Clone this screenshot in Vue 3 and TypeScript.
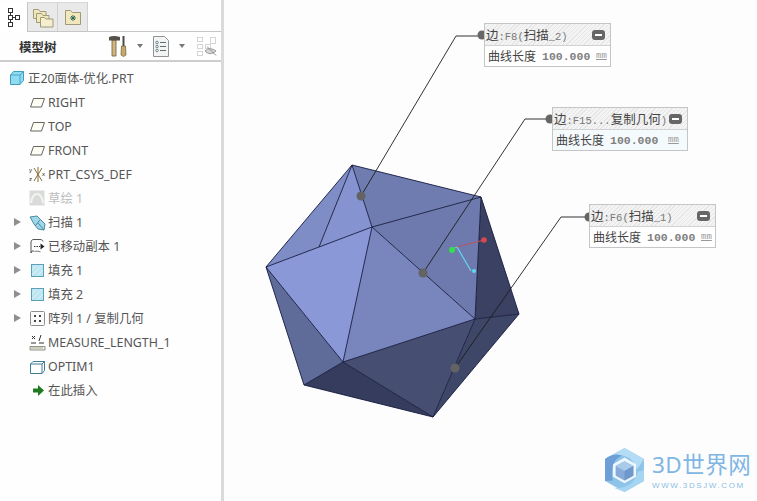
<script setup lang="ts">
interface TreeRow {
  label: string;
  icon: string;
  arrow?: boolean;
  muted?: boolean;
}

interface Callout {
  title: string;
  left: number;
  top: number;
  tint?: boolean;
}

const rows: TreeRow[] = [
  { label: "RIGHT", icon: "plane" },
  { label: "TOP", icon: "plane" },
  { label: "FRONT", icon: "plane" },
  { label: "PRT_CSYS_DEF", icon: "csys" },
  { label: "草绘 1", icon: "sketch", muted: true },
  { label: "扫描 1", icon: "sweep", arrow: true },
  { label: "已移动副本 1", icon: "move", arrow: true },
  { label: "填充 1", icon: "fill", arrow: true },
  { label: "填充 2", icon: "fill", arrow: true },
  { label: "阵列 1 / 复制几何", icon: "pattern", arrow: true },
  { label: "MEASURE_LENGTH_1", icon: "measure" },
  { label: "OPTIM1", icon: "optim" },
  { label: "在此插入", icon: "insert" },
];

const callouts: Callout[] = [
  { title: "边:F8(扫描_2)", left: 260, top: 23 },
  { title: "边:F15...复制几何)", left: 328, top: 107, tint: true },
  { title: "边:F6(扫描_1)", left: 365, top: 204 },
];

// chinese runs are drawn a bit larger than the mono part of the title
function titleParts(title: string) {
  return title.split(/([\u4e00-\u9fff]+)/).filter((p) => p);
}

function isCjk(part: string) {
  return /[\u4e00-\u9fff]/.test(part);
}

// faces of the part, in canvas coordinates (svg starts at x=224)
const faces = [
  { d: "128,165 95,247 42,267", c: "#7f8dc6" },
  { d: "128,165 148,227 95,247", c: "#8593d0" },
  { d: "128,165 257,197 148,227", c: "#6f7cb0" },
  { d: "42,267 148,227 119,362", c: "#8a98d8" },
  { d: "148,227 251,319 119,362", c: "#7985bd" },
  { d: "148,227 257,197 251,319", c: "#6e7aad" },
  { d: "257,197 295,314 251,319", c: "#3b4162" },
  { d: "42,267 119,362 80,385", c: "#5f6b98" },
  { d: "119,362 251,319 209,417", c: "#464e72" },
  { d: "251,319 295,314 209,417", c: "#3f4768" },
  { d: "119,362 209,417 80,385", c: "#363c5d" },
];

const edges = [
  "128,165 42,267 80,385 209,417 295,314 257,197 128,165",
  "128,165 95,247",
  "128,165 148,227 119,362",
  "42,267 148,227 257,197",
  "148,227 251,319 119,362 80,385",
  "42,267 119,362 209,417 251,319 257,197",
  "251,319 295,314",
];

const leaders = [
  "256,36 232,36 137,196",
  "324,119 301,119 199,273",
  "363,217 337,217 231,368",
];

const pins = [
  [137, 196],
  [199, 273],
  [231, 368],
];

const anchors = [
  [258, 35],
  [326, 119],
  [365, 217],
];
</script>

<template>
  <div class="screen">
    <aside class="sidebar">
      <div class="tabs">
        <div class="tab active">
          <svg width="14" height="20" viewBox="0 0 14 20">
            <g fill="#fff" stroke="#333">
              <rect x="1.500" y="1.500" width="4" height="4" />
              <rect x="1.500" y="8.500" width="4" height="4" />
              <rect x="8.500" y="8.500" width="4" height="4" />
              <rect x="1.500" y="15.500" width="4" height="4" />
            </g>
            <path d="M3.500 5.500v3M3.500 12.500v3M5.500 10.500h3" stroke="#333" fill="none" />
          </svg>
        </div>
        <div class="tab">
          <svg width="22" height="22" viewBox="0 0 22 22">
            <g stroke="#a09a78" fill="#f1e7bd">
              <path d="M1.500 3.500h5l1.500 2h6v7h-12.500z" />
              <path d="M4.500 7.500h5l1.500 2h6v7h-12.500z" />
              <path d="M8.500 11.500h4l1.500 1.500h7v8h-12.500z" fill="#f6efcf" />
            </g>
          </svg>
        </div>
        <div class="tab">
          <svg width="16" height="15" viewBox="0 0 16 15">
            <path d="M.5.500h5l2 2h8v12H.5z" fill="#f1e7bd" stroke="#a09a78" />
            <path d="M8 5v6M5 8h6M6 6l4 4M10 6l-4 4" stroke="#2d6b57" />
          </svg>
        </div>
      </div>

      <div class="toolbar">
        <span class="title">模型树</span>
        <svg class="tool-a" width="20" height="22" viewBox="0 0 20 22">
          <path d="M4 5h4v16H4z" fill="#d2b67e" stroke="#6a5d40" stroke-width=".8" />
          <path d="M1 2c3-1.500 7-1.500 11 0v3.500H1z" fill="#55524a" />
          <path d="M14.500 1h2v10h-2z" fill="#4a4a4a" />
          <path d="M13.500 11h4l.5 9-2.500 1.500L13 20z" fill="#c9a96a" stroke="#6a5a38" stroke-width=".7" />
        </svg>
        <i class="caret caret-a"></i>
        <svg class="tool-b" width="16" height="21" viewBox="0 0 16 21">
          <path d="M.5.500h11l4 4v16H.5z" fill="#f3f5f5" stroke="#8d9498" />
          <path d="M7 6.500h6M7 10.500h6M7 14.500h6" stroke="#5f6c70" />
          <g fill="none" stroke="#6f8a8d">
            <circle cx="4" cy="6.500" r="1.300" />
            <circle cx="4" cy="10.500" r="1.300" />
            <circle cx="4" cy="14.500" r="1.300" />
          </g>
        </svg>
        <i class="caret caret-b"></i>
        <svg class="tool-c" width="21" height="21" viewBox="0 0 21 21">
          <g fill="#fff" stroke="#d4d6d6">
            <rect x="1.500" y="1.500" width="5" height="4" />
            <rect x="1.500" y="8.500" width="5" height="4" />
            <rect x="1.500" y="15.500" width="5" height="4" />
            <rect x="9.500" y="8.500" width="5" height="4" />
            <rect x="14.500" y="1.500" width="5" height="6" />
          </g>
          <path d="M9 15c3-3 7-3 11 0-4 3.500-8 3.500-11 0z" fill="#d5d6d6" stroke="#9a9d9d" />
          <path d="M11 10.500l9 9" stroke="#8f9292" />
        </svg>
      </div>

      <ul class="tree">
        <li class="row root">
          <svg class="root-icon" width="14" height="14" viewBox="0 0 14 14">
            <path d="M3.500.500h10v9l-3.500 4H.500v-9.500z" fill="#8fdcf2" stroke="#3f9dbb" />
            <path d="M.500 4h9.500l3.500-3.500M10 4v9.500" fill="none" stroke="#4aa6c2" />
          </svg>
          <span>正20面体-优化.PRT</span>
        </li>
        <li v-for="row in rows" :key="row.label" class="row">
          <span class="arrow-slot"><i v-if="row.arrow" class="arrow"></i></span>
          <span class="icon-slot">
            <svg width="17" height="17" viewBox="0 0 17 17">
              <path v-if="row.icon === 'plane'" d="M4.500 4.500h11l-3 8.500H1.500z" fill="#fdfdf6" stroke="#66665c" />
              <g v-else-if="row.icon === 'csys'">
                <path d="M5 2l8 13M13 2L5 15M9 1v15" stroke="#8a6f3a" fill="none" />
                <text x="0" y="6" class="axis">y</text>
                <text x="0" y="15" class="axis">z</text>
                <text x="13" y="10" class="axis">x</text>
              </g>
              <g v-else-if="row.icon === 'sketch'">
                <rect x=".5" y=".5" width="15" height="15" fill="#d9dbd9" />
                <path d="M2 13c1-7 4-9 6-9s5 2 6 9" fill="none" stroke="#f3f3f3" stroke-width="2" />
              </g>
              <g v-else-if="row.icon === 'sweep'">
                <path d="M1 3l7-1 4 4 4 4-1 6-6-1-4-5z" fill="#9fd6e8" stroke="#4c8ba3" />
                <path d="M9 9l6 7M6 12l5-6" stroke="#4c8ba3" fill="none" />
              </g>
              <g v-else-if="row.icon === 'move'">
                <path d="M5 13H3l-1 2 0-11c0-1.500 1-2.500 3-2.500h6c2 0 3 1 3 2" fill="none" stroke="#555" />
                <path d="M5.500 13.500c2-.5 4-.5 6 .5" fill="none" stroke="#777" />
                <path d="M5 8.500h6" stroke="#333" stroke-dasharray="1.500 1" />
                <path d="M11.500 5.500l4 3-4 3z" fill="#222" />
              </g>
              <g v-else-if="row.icon === 'fill'">
                <rect x="2.500" y="2.500" width="12" height="12" fill="#bce6f0" stroke="#5a9fb5" />
                <path d="M3 8l5-5M3 13l10-10M8 14l6-6" stroke="#d7f2f7" />
              </g>
              <g v-else-if="row.icon === 'pattern'">
                <rect x="1.500" y="1.500" width="14" height="14" rx="1" fill="#fbfbfb" stroke="#8b8f92" />
                <path d="M5 5h2v2H5zM10 5h2v2h-2zM5 10h2v2H5zM10 10h2v2h-2z" fill="#444" />
              </g>
              <g v-else-if="row.icon === 'measure'">
                <path d="M1 12.500h15v3.500H1z" fill="#f2f2e6" stroke="#77776a" stroke-width=".8" />
                <path d="M3 13v2M5 13v2M7 13v2M9 13v2M11 13v2M13 13v2" stroke="#77776a" stroke-width=".6" />
                <path d="M3 2l3 3M6 2L3 5M12 1l-2 6M2 9h5M10 9h5" stroke="#333" fill="none" />
              </g>
              <g v-else-if="row.icon === 'optim'">
                <path d="M4 3.500h11.500v9L13 15.500H1.500V6z" fill="#fff" stroke="#3f7d92" />
                <path d="M1.500 6h11.500l2.500-2.500M13 6v9.500" fill="none" stroke="#3f7d92" />
              </g>
              <path v-else d="M4 6.500h5V3l6 5.500-6 5.500v-3.500H4z" fill="#1f7a1f" />
            </svg>
          </span>
          <span :class="{ muted: row.muted }">{{ row.label }}</span>
        </li>
      </ul>
    </aside>

    <main class="canvas">
      <svg class="model" width="533" height="501" viewBox="0 0 533 501">
        <polygon v-for="f in faces" :key="f.d" :points="f.d" :fill="f.c" />
        <polyline v-for="e in edges" :key="e" :points="e" fill="none" stroke="#141a3c" stroke-width=".9" />
        <polyline v-for="l in leaders" :key="l" :points="l" fill="none" stroke="#1c1c1c" stroke-width=".9" />
        <circle v-for="p in pins" :key="p[0]" :cx="p[0]" :cy="p[1]" r="4.500" fill="#636363" />
        <circle v-for="a in anchors" :key="a[0]" :cx="a[0]" :cy="a[1]" r="4.500" fill="#666" />
        <path d="M233 247l-5 2" stroke="#5fe08a" fill="none" />
        <circle cx="228" cy="250" r="3" fill="#35dd4f" />
        <path d="M233 247l27-7" stroke="#b9545f" fill="none" />
        <circle cx="260" cy="240" r="2.800" fill="#d84850" />
        <path d="M233 247l14 24" stroke="#62d7ee" stroke-width="1.200" fill="none" />
        <circle cx="250" cy="271" r="2" fill="#62d7ee" />
      </svg>

      <div
        v-for="c in callouts"
        :key="c.title"
        class="callout"
        :class="{ tint: c.tint }"
        :style="{ left: c.left + 'px', top: c.top + 'px' }"
      >
        <div class="callout-head">
          <span class="callout-title">
            <span v-for="(p, i) in titleParts(c.title)" :key="i" :class="{ cjk: isCjk(p) }">{{ p }}</span>
          </span>
          <i class="minus"></i>
        </div>
        <div class="callout-body">
          <span class="cell-label">曲线长度</span>
          <span class="cell-value">100.000</span>
          <span class="cell-unit">mm</span>
        </div>
      </div>

      <div class="watermark">
        <svg width="41" height="46" viewBox="0 0 46 52">
          <path d="M23 1l22 12.500v25L23 51 1 38.500v-25z" fill="#8fc4ea" />
          <path d="M23 1l22 12.500-8 12C34 14 26 8 9 9z" fill="#b4dcf4" />
          <path d="M1 13.500C10 7 16 8 20 10 9 14 7 28 10 38L1 38.500z" fill="#6d9fd6" />
          <path d="M45 38.500L23 51l-12-5c12 2 24-4 27-18l7-2z" fill="#a5d5f1" />
          <path d="M23 12l13 7.500v14L23 41l-13-7.500v-14z" fill="#eef7fd" />
          <path d="M23 16l10 5.500v11L23 38l-10-5.500v-11z" fill="#86abd8" />
          <path d="M13 21.500l10 5.500 10-5.500-10-5.500z" fill="#a9cbea" />
          <path d="M23 27v11l10-5.500v-11z" fill="#6f98cc" />
        </svg>
        <div class="brand">
          <span class="brand-name">3D世界网</span>
          <span class="brand-url">WWW.3DSJW.COM</span>
        </div>
      </div>
    </main>
  </div>
</template>

<style scoped>
.screen {
  display: flex;
  width: 757px;
  height: 501px;
  overflow: hidden;
  background: #fdfdfe;
  font-family: "Noto Sans", "Noto Sans CJK SC", sans-serif;
  color: #444;
}

.sidebar {
  width: 221px;
  flex: none;
  border-right: 3px solid #dadada;
  background: #fefefe;
}

.tabs {
  display: flex;
  height: 32px;
  padding-top: 2px;
  box-sizing: border-box;
  border-bottom: 1px solid #c6c6c6;
}

.tab {
  width: 29px;
  display: flex;
  align-items: center;
  justify-content: center;
  background: #e9e9e9;
  border-right: 1px solid #d0d0d0;
  border-top: 1px solid #d8d8d8;
}

.tab.active {
  width: 27px;
  background: #fff;
  border-top: none;
  margin-bottom: -1px;
  border-right: 1px solid #c6c6c6;
}

.toolbar {
  height: 28px;
  border-bottom: 2px solid #cdcdcd;
  display: flex;
  align-items: center;
}

.title {
  margin-left: 19px;
  font-size: 12.500px;
  font-weight: 700;
  color: #333;
  width: 89px;
}

.tool-a {
  margin-right: 9px;
}

.caret {
  width: 0;
  height: 0;
  border: 3px solid transparent;
  border-top: 4px solid #777;
  border-bottom: none;
}

.caret-a {
  margin-right: 10px;
}

.caret-b {
  margin: 0 11px 0 10px;
}

.tree {
  list-style: none;
  margin: 0;
  padding: 4px 0 0;
}

.row {
  height: 24px;
  display: flex;
  align-items: center;
  font-size: 12.400px;
  white-space: nowrap;
  color: #555;
}

.root-icon {
  margin: 0 4px 0 10px;
}

.arrow-slot {
  width: 15px;
  padding-left: 14px;
  box-sizing: border-box;
  flex: none;
}

.arrow {
  display: block;
  width: 0;
  height: 0;
  border-left: 7px solid #8f8f8f;
  border-top: 4.500px solid transparent;
  border-bottom: 4.500px solid transparent;
}

.icon-slot {
  width: 19px;
  margin-left: 14px;
  flex: none;
  display: flex;
}

.muted {
  color: #bdbdbd;
}

.axis {
  font-size: 6px;
  fill: #222;
  font-family: "Liberation Sans", sans-serif;
}

.canvas {
  position: relative;
  flex: 1;
}

.model {
  position: absolute;
  left: 0;
  top: 0;
}

.callout {
  position: absolute;
  width: 127px;
  border: 1px solid #c3c5c6;
  background: #fff;
  box-sizing: border-box;
  font-family: "Liberation Mono", "Noto Sans CJK SC", monospace;
}

.callout.tint {
  width: 136px;
  background: #f5fbfd;
}

.callout-head {
  height: 21px;
  display: flex;
  align-items: center;
  justify-content: space-between;
  padding: 0 4px 0 1px;
  border-bottom: 1px solid #d0d2d3;
  background: repeating-linear-gradient(135deg, #e6e6e6 0 1px, #f4f4f4 1px 3px);
}

.callout-title {
  font-size: 10.500px;
  color: #777;
  white-space: nowrap;
}

.cjk {
  font-size: 12.500px;
  color: #444;
}

.minus {
  position: relative;
  width: 13px;
  height: 10px;
  margin-right: 1px;
  border-radius: 3px;
  background: #666;
}

.minus::after {
  content: "";
  position: absolute;
  left: 3px;
  right: 3px;
  top: 4px;
  height: 2px;
  background: #fff;
}

.callout-body {
  height: 20px;
  display: flex;
  align-items: center;
  padding-left: 3px;
}

.cell-label {
  width: 50px;
  font-size: 12px;
  color: #444;
  white-space: nowrap;
}

.cell-value {
  padding-left: 4px;
  width: 54px;
  font-size: 11.500px;
  font-weight: 700;
  color: #808080;
}

.tint .cell-value {
  width: 58px;
}

.cell-unit {
  font-size: 9px;
  color: #999;
  text-decoration: underline;
}

.watermark {
  position: absolute;
  left: 380px;
  top: 447px;
  display: flex;
  gap: 7px;
}

.brand {
  display: flex;
  flex-direction: column;
  padding-top: 2px;
}

.brand-name {
  font-family: "Noto Sans", "Noto Sans CJK SC", sans-serif;
  font-size: 22.500px;
  letter-spacing: 0.500px;
  line-height: 32px;
  color: #7fb6e4;
  white-space: nowrap;
}

.brand-url {
  font-family: "Liberation Sans", sans-serif;
  font-size: 8px;
  letter-spacing: 1.600px;
  line-height: 10px;
  color: #8dbde2;
}
</style>
